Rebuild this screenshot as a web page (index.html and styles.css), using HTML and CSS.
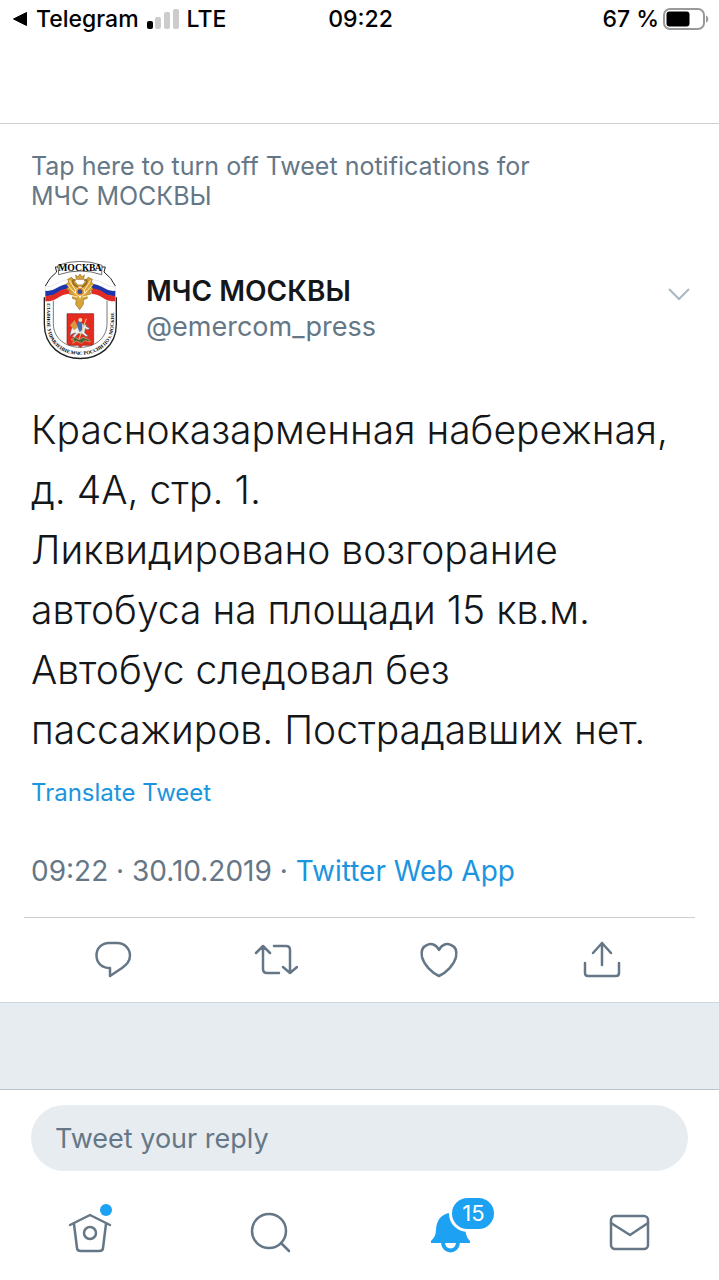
FILE: index.html
```
<!DOCTYPE html>
<html lang="ru">
<head>
    <meta charset="UTF-8">
    <meta name="viewport" content="width=device-width, initial-scale=1.0">
    <title>МЧС МОСКВЫ</title>
    <link rel="stylesheet" href="styles.css">
</head>
<body>
    <div class="status-bar">
        <div class="status-left">
            <svg width="16" height="16" viewBox="0 0 16 16"><path d="M1.500 8 14.500 1.500V14.500Z" stroke="#000" stroke-linejoin="round"/></svg>
            <span>Telegram</span>
            <svg width="32" height="22" viewBox="0 0 32 22">
                <rect x="0" y="13" width="6" height="8" rx="2"/>
                <g fill="#ccc">
                    <rect x="8" y="9" width="6" height="12" rx="2"/>
                    <rect x="17" y="4" width="6" height="17" rx="2"/>
                    <rect x="26" y="1" width="6" height="20" rx="2"/>
                </g>
            </svg>
            <span>LTE</span>
        </div>
        <div class="status-time">09:22</div>
        <div class="status-right">
            <span>67 %</span>
            <svg width="46" height="22" viewBox="0 0 46 22">
                <rect x="1" y="1" width="40" height="20" rx="6" fill="#fff" stroke="#999" stroke-width="2"/>
                <rect x="3.500" y="3.500" width="23" height="15" rx="3"/>
                <path d="M43 7.500c3 1 3 6 0 7z" fill="#999"/>
            </svg>
        </div>
    </div>

    <main class="tweet">
        <a class="notice" href="#">Tap here to turn off Tweet notifications for МЧС МОСКВЫ</a>

        <div class="author">
            <svg class="avatar" viewBox="3 33 300 300">
                <defs>
                    <path id="motto" d="M51 160V222C51 346 251 346 251 222V150"/>
                </defs>
                <path d="M43 142V222C43 360 259 360 259 222V142" fill="#fff" stroke="#222" stroke-width="4"/>
                <path d="M70 152V220C70 316 231 316 231 220V152" fill="none" stroke="#333" stroke-width="2"/>
                <path d="M84 46Q150 22 216 46L215 74Q150 52 86 74Z" fill="#fff" stroke="#222" stroke-width="2"/>
                <path d="M84 51H76L80 66Q58 82 46 108M216 51H226L222 66Q244 82 256 108" fill="none" stroke="#222" stroke-width="3"/>
                <text x="150" y="62" text-anchor="middle" font-size="29" font-weight="700">МОСКВА</text>
                <text font-size="15" font-weight="700"><textPath href="#motto">ГЛАВНОЕ УПРАВЛЕНИЕ МЧС РОССИИ ПО г. МОСКВЕ</textPath></text>
                <path d="M46 110Q64 112 80 101T118 88V102Q98 104 84 114T46 123Z" fill="#fff" stroke="#bbb"/>
                <path d="M46 122Q64 125 80 114T118 101V116Q98 118 84 128T46 138Z" fill="#1d35ad"/>
                <path d="M46 137Q64 140 80 128T118 115V131Q98 132 84 143T46 154Z" fill="#e32b26"/>
                <path d="M256 110Q238 112 222 101T184 88V102Q204 104 218 114T256 123Z" fill="#fff" stroke="#bbb"/>
                <path d="M256 122Q238 125 222 114T184 101V116Q204 118 218 128T256 138Z" fill="#1d35ad"/>
                <path d="M256 137Q238 140 222 128T184 115V131Q204 132 218 143T256 154Z" fill="#e32b26"/>
                <g fill="#d9a437" stroke="#946b20" stroke-width="2">
                    <path d="M139 88 137 75 144 81 150 72 156 81 163 75 161 88Z"/>
                    <path d="M143 105 125 82 113 88 116 96 108 103 116 110 109 118 121 123 117 132 130 135 127 145 139 149 137 163 149 179 160 163 160 149 172 145 170 135 182 132 179 123 190 118 184 110 191 103 184 96 187 88 174 82 158 105Z"/>
                    <path d="M137 91Q124 86 130 101L145 113M162 91Q175 86 169 101L155 113" fill="none" stroke-width="5"/>
                </g>
                <path d="M118 91 140 126M113 105 139 134M125 137 143 141M182 91 160 126M187 105 161 134M175 137 157 141" stroke="#fff0b5" stroke-width="3"/>
                <path d="M150 107 155 119 168 125 155 131 150 148 145 131 132 125 145 119Z" fill="#fff"/>
                <circle cx="150" cy="125" r="13" fill="#e68b23" stroke="#fff" stroke-width="2"/>
                <circle cx="150" cy="125" r="7" fill="#294b9a"/>
                <path d="M111 191H191V278Q191 286 178 286H159L151 292 143 286H124Q111 286 111 278Z" fill="#e52b20" stroke="#7e2620" stroke-width="2"/>
                <path d="M124 237 132 227 146 230 155 219 163 225 171 223 168 229 179 234 174 240 166 236 164 248 175 258 168 260 157 252 144 251 134 262 126 260 137 249 127 252 119 258Z" fill="#eee" stroke="#695e60" stroke-width="2"/>
                <path d="M143 233 141 217 149 213 157 224 157 240 149 247Z" fill="#416db0"/>
                <circle cx="151" cy="210" r="6" fill="#efdbac"/>
                <path d="M134 210 120 226 133 241 144 231Z" fill="#d99a42"/>
                <path d="M169 206 146 270" stroke="#ecd07d" stroke-width="3"/>
                <path d="M123 269 136 261 147 269 159 262 176 268 181 276 164 272 154 280 139 273 128 280 132 270Z" fill="#4b633a" stroke="#d9b669" stroke-width="2"/>
            </svg>
            <div class="names">
                <div class="name">МЧС МОСКВЫ</div>
                <a class="handle" href="#">@emercom_press</a>
            </div>
            <button class="more" aria-label="More">
                <svg width="24" height="14" viewBox="0 0 24 14"><path d="M2 2 12 12 22 2" fill="none" stroke="#aab8c2" stroke-width="2"/></svg>
            </button>
        </div>

        <p class="text">Красноказарменная набережная, д. 4А, стр. 1.<br>Ликвидировано возгорание автобуса на площади 15 кв.м. Автобус следовал без пассажиров. Пострадавших нет.</p>
        <a class="translate" href="#">Translate Tweet</a>
        <div class="meta">09:22 · 30.10.2019 · <a href="#">Twitter Web App</a></div>
    </main>

    <div class="actions">
        <button aria-label="Reply">
            <svg class="line" width="42" height="42" viewBox="0 0 42 42"><path d="M17 4H25C33 4 38 10 38 16.500 38 23 34 26 30 29L18 37V29C10 29 4.500 24 4.500 16.500 4.500 9 10 4 17 4Z"/></svg>
        </button>
        <button aria-label="Retweet">
            <svg class="line" width="44" height="42" viewBox="0 0 44 42"><path d="M2 14 9 7 16 14M9 7V30Q9 34 13 34H25M20 7H32Q36 7 36 11V34M29 28 36 34 43 28"/></svg>
        </button>
        <button aria-label="Like">
            <svg class="line" width="42" height="42" viewBox="0 0 42 42"><path d="M21 11C18 5 13 4 9 6 4 8 3 13 4 18 6 26 14 34 21 37 28 34 36 26 38 18 39 13 38 8 33 6 29 4 24 5 21 11Z"/></svg>
        </button>
        <button aria-label="Share">
            <svg class="line" width="42" height="42" viewBox="0 0 42 42"><path d="M4 24V34Q4 37 7 37H35Q38 37 38 34V24M21 26V4M12 14 21 4 30 14"/></svg>
        </button>
    </div>

    <div class="spacer"></div>

    <div class="composer">
        <input type="text" placeholder="Tweet your reply" aria-label="Tweet your reply">
    </div>

    <nav class="tabs">
        <a href="#" aria-label="Home">
            <svg class="line" width="44" height="44" viewBox="0 0 44 44">
                <path d="M2 15 22 5 42 15M6 14 9 38Q9 41 13 41H31Q35 41 35 38L38 14"/>
                <circle cx="22" cy="23" r="6"/>
            </svg>
            <span class="dot"></span>
        </a>
        <a href="#" aria-label="Search">
            <svg class="line" width="44" height="44" viewBox="0 0 44 44"><circle cx="21" cy="21" r="17"/><path d="M33 33 41 41"/></svg>
        </a>
        <a href="#" aria-label="Notifications">
            <svg width="44" height="44" viewBox="-2 0 44 44">
                <path d="M21 3C12 4 8 10 7 19 7 25 5 28 2 31V33H41V31C37 27 37 23 36 18Z" fill="#1da1f2"/>
                <path d="M14 33C15 43 28 43 29 33" fill="#fff" stroke="#1da1f2" stroke-width="4"/>
            </svg>
            <span class="badge">15</span>
        </a>
        <a href="#" aria-label="Messages">
            <svg class="line" width="44" height="44" viewBox="0 0 44 44"><rect x="4" y="6" width="37" height="33" rx="4"/><path d="M4 13 23 25 41 13"/></svg>
        </a>
    </nav>
</body>
</html>
```
FILE: styles.css
```
* {
    box-sizing: border-box;
}
body {
    margin: 0;
    background-color: #fff;
    color: #14171a;
    font-family: Inter, "Noto Sans", sans-serif;
}
a {
    color: #1b95e0;
    text-decoration: none;
}
button {
    padding: 0;
    border: none;
    background: none;
    cursor: pointer;
}
svg {
    display: block;
}
.line {
    fill: none;
    stroke: #657786;
    stroke-width: 2.5;
    stroke-linecap: round;
    stroke-linejoin: round;
}
.status-bar {
    display: grid;
    grid-template-columns: 1fr auto 1fr;
    align-items: start;
    height: 124px;
    padding: 4px 10px 0 12px;
    border-bottom: 1px solid #ccd0d3;
    color: #000;
    font-size: 23px;
    font-weight: 500;
    line-height: 30px;
}
.status-left,
.status-right {
    display: flex;
    align-items: center;
    gap: 8px;
}
.status-right {
    justify-content: flex-end;
    gap: 4px;
}
.tweet {
    padding: 27px 28px 0 31px;
}
.notice {
    display: block;
    max-width: 520px;
    color: #657786;
    font-size: 25px;
    line-height: 30px;
}
.author {
    display: flex;
    align-items: center;
    margin-top: 50px;
}
.avatar {
    width: 100px;
    height: 100px;
    font-family: "Liberation Serif", serif;
}
.names {
    flex: 1;
    margin: 0 0 4px 15px;
    font-size: 27px;
    line-height: 35px;
}
.name {
    font-size: 28px;
    font-weight: 600;
}
.handle {
    color: #657786;
}
.more {
    margin-bottom: 34px;
}
.text {
    margin: 39px 0 0;
    font-size: 39px;
    font-weight: 300;
    line-height: 60px;
}
.translate {
    display: block;
    margin-top: 18px;
    font-size: 24px;
    line-height: 30px;
}
.meta {
    margin-top: 46px;
    color: #657786;
    font-size: 28px;
    line-height: 34px;
}
.actions {
    display: grid;
    grid-template-columns: repeat(4, 1fr);
    align-items: center;
    height: 85px;
    margin: 29px 24px 0;
    padding: 0 12px 0 7px;
    border-top: 1px solid #ccd0d3;
}
.actions button {
    display: flex;
    justify-content: center;
}
.spacer {
    height: 88px;
    border-top: 1px solid #ccd6dd;
    border-bottom: 1px solid #bcc3c8;
    background-color: #e6ecf0;
}
.composer {
    padding: 15px 31px 0;
}
.composer input {
    display: block;
    width: 100%;
    height: 66px;
    padding: 0 24px;
    border: none;
    border-radius: 33px;
    background-color: #e6ecf0;
    font-family: inherit;
    font-size: 27px;
}
.composer input::placeholder {
    color: #657786;
    opacity: 1;
}
.tabs {
    display: grid;
    grid-template-columns: repeat(4, 1fr);
    justify-items: center;
    padding: 39px 0 25px;
}
.tabs a {
    position: relative;
}
.dot {
    position: absolute;
    top: -6px;
    right: 0;
    width: 12px;
    height: 12px;
    border-radius: 50%;
    background-color: #1da1f2;
}
.badge {
    position: absolute;
    top: -15px;
    left: 22px;
    width: 48px;
    border: 3px solid #fff;
    border-radius: 20px;
    background-color: #1da1f2;
    color: #fff;
    font-size: 22px;
    line-height: 31px;
    text-align: center;
}
```
